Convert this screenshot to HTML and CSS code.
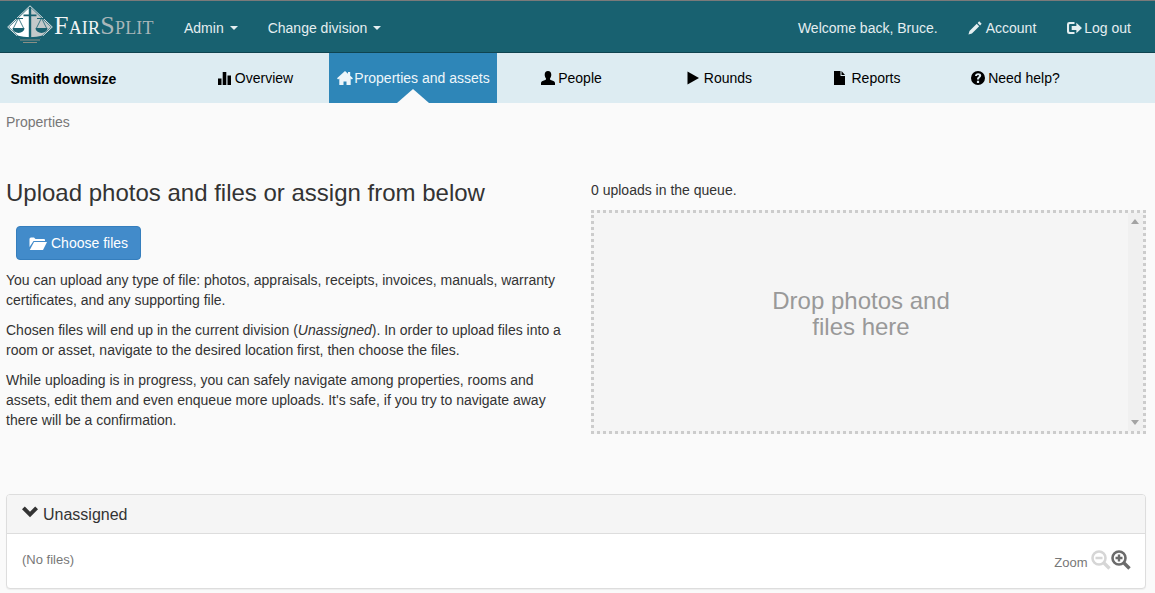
FILE: index.html
```html
<!DOCTYPE html>
<html lang="en">
<head>
<meta charset="utf-8">
<title>FairSplit</title>
<link rel="stylesheet" href="styles.css">
</head>
<body>
<header class="topbar">
  <a class="logo">
    <svg class="logo-mark" viewBox="0 0 46 40" width="46" height="40">
      <path d="M22 3L2 22 13 32.500H22Z" fill="#fff"/>
      <path d="M24 3L44 22 33 32.500H24Z" fill="#c3c9ca"/>
      <path d="M23 .8L45.300 22 33.500 33M23 .8L.7 22 12.500 33" fill="none" stroke="#dfe4e5" stroke-width="1"/>
      <path d="M21.800 3h2.400v6.500h5.300v1.800h-5.300V32h-2.400V11.300h-5.300V9.500h5.300z" fill="#186170"/>
      <path d="M8 13.500h8M30 13.500h8" stroke="#186170" stroke-width="1.200" fill="none"/>
      <path d="M11.500 13 6.500 23M11.500 13l5 10M34.500 13l-5 10M34.500 13l5 10" stroke="#186170" stroke-width=".8" fill="none"/>
      <path d="M5.500 23h12a6 5 0 0 1-12 0zM28.500 23h12a6 5 0 0 1-12 0z" fill="#186170"/>
      <path d="M10 30.500q13 3.500 26 0v3H10z" fill="#186170"/>
      <path d="M13 35h20M16 37.500h14" stroke="#8a8f85" stroke-width="1" fill="none"/>
    </svg>
    <span class="logo-text"><span class="logo-fair">Fair</span><span class="logo-split">Split</span></span>
  </a>
  <nav class="topnav">
    <a class="topnav-item">Admin<span class="caret"></span></a>
    <a class="topnav-item">Change division<span class="caret"></span></a>
  </nav>
  <div class="topright">
    <span class="welcome">Welcome back, Bruce.</span>
    <a class="topnav-item">
      <svg class="ico" viewBox="0 0 16 16"><path d="M12.800 0.400l2.800 2.800-1.800 1.800-2.800-2.800zM10 3.200L12.800 6 4.500 14.300 0.500 15.500l1.200-4z"/></svg>
      <span>Account</span></a>
    <a class="topnav-item">
      <svg class="ico ico-wide" viewBox="0 0 16 14"><path d="M0 3a2.500 2.500 0 0 1 2.500-2.500H8v2.200H3.200a1 1 0 0 0-1 1v6.600a1 1 0 0 0 1 1H8v2.200H2.500A2.500 2.500 0 0 1 0 11z"/><path d="M5 4.800h5V1.500L16 7l-6 5.500V9.200H5z"/></svg>
      <span>Log out</span></a>
  </div>
</header>

<nav class="subnav">
  <div class="case-name">Smith downsize</div>
  <a class="tab">
    <svg class="ico" viewBox="0 0 14 14"><path d="M0 7.500h3.500V14H0zM4.700 1h3.600v13H4.700zM9.500 4.500H13V14H9.500z"/></svg>
    <span>Overview</span></a>
  <a class="tab tab-active">
    <svg class="ico" viewBox="0 0 16 14"><path d="M8 0l3 2.700V1h2.200v3.700L16 7.300 14.900 8.500 13.700 7.500V14H9.500v-3.500h-3V14H2.300V7.500L1.100 8.500 0 7.300z"/></svg>
    <span>Properties and assets</span></a>
  <a class="tab">
    <svg class="ico" viewBox="0 0 14 14"><path d="M7 0c2.200 0 3.300 1.700 3.300 3.800 0 1.500-.6 2.900-1.300 3.700-.3.900.2 1.400 1.400 1.800 1.900.6 3.600 1.300 3.600 2.600V14H0v-2.100c0-1.300 1.700-2 3.600-2.600C4.800 8.900 5.300 8.400 5 7.500 4.300 6.700 3.700 5.300 3.700 3.800 3.700 1.700 4.800 0 7 0z"/></svg>
    <span>People</span></a>
  <a class="tab">
    <svg class="ico" viewBox="0 0 14 14"><path d="M.5 .5L12 7 .5 13.500z"/></svg>
    <span>Rounds</span></a>
  <a class="tab">
    <svg class="ico" viewBox="0 0 14 14"><path d="M0 0h6.500v5H11v9H0zM7.500 0L11 4H7.500z"/></svg>
    <span>Reports</span></a>
  <a class="tab">
    <svg class="ico" viewBox="0 0 14 14"><path fill-rule="evenodd" d="M7 0a7 7 0 1 1 0 14A7 7 0 0 1 7 0zM5.900 9.800V12h2.200V9.800zM7.100 2.200c-1.700 0-3 .9-3.100 2.700h2.100c0-.7.400-1 1-1s.9.300.9.800c0 1-2 1.300-2 3.300v.5h2.100v-.4c0-1.100 2.100-1.500 2.100-3.500 0-1.600-1.300-2.400-3.100-2.400z"/></svg>
    <span>Need help?</span></a>
</nav>

<main class="page">
  <div class="crumb">Properties</div>
  <section class="upload">
    <div class="upload-left">
      <h3 class="upload-title">Upload photos and files or assign from below</h3>
      <button class="btn-choose">
        <svg class="ico ico-folder" viewBox="0 0 18 14"><path d="M0.500 3a1.500 1.500 0 0 1 1.500-1.500h3L6.500 3H15a1 1 0 0 1 1 1v1H4.500L0.500 11z"/><path d="M5 6h13l-4 8H0.800z"/></svg>
        <span>Choose files</span></button>
      <p>You can upload any type of file: photos, appraisals, receipts, invoices, manuals, warranty certificates, and any supporting file.</p>
      <p>Chosen files will end up in the current division (<em>Unassigned</em>). In order to upload files into a room or asset, navigate to the desired location first, then choose the files.</p>
      <p>While uploading is in progress, you can safely navigate among properties, rooms and assets, edit them and even enqueue more uploads. It's safe, if you try to navigate away there will be a confirmation.</p>
    </div>
    <div class="upload-right">
      <div class="queue">0 uploads in the queue.</div>
      <div class="dropzone">
        <div class="drop-text">Drop photos and files here</div>
        <div class="drop-scroll"><span class="arrow-up"></span><span class="arrow-down"></span></div>
      </div>
    </div>
  </section>
  <section class="panel">
    <div class="panel-head">
      <svg class="chev" viewBox="0 0 16 12"><path d="M2.800 0.500L8 5.700 13.200 0.500 16 3.300 8 11.300 0 3.300z"/></svg>
      <span>Unassigned</span>
    </div>
    <div class="panel-body">
      <span class="nofiles">(No files)</span>
      <div class="zoom">
        <span class="zoom-label">Zoom</span>
        <svg class="zoom-ico zoom-off" viewBox="0 0 20 20"><circle cx="8" cy="8" r="6.500" fill="none" stroke-width="2.600"/><path d="M12.500 12.500L18.500 18.500" stroke-width="3.400" fill="none"/><path d="M4.500 8h7" stroke-width="2.400" fill="none"/></svg>
        <svg class="zoom-ico zoom-on" viewBox="0 0 20 20"><circle cx="8" cy="8" r="6.500" fill="none" stroke-width="2.600"/><path d="M12.500 12.500L18.500 18.500" stroke-width="3.400" fill="none"/><path d="M4.500 8h7M8 4.500v7" stroke-width="2.400" fill="none"/></svg>
      </div>
    </div>
  </section>
</main>
</body>
</html>
```
FILE: styles.css
```css
* { box-sizing: border-box; }
html, body { margin: 0; height: 100%; }
body {
  font-family: "Liberation Sans", Arial, sans-serif;
  font-size: 14px;
  line-height: 20px;
  color: #333;
  background: #fafafa;
  overflow: hidden;
}
.topbar {
  height: 53px;
  display: flex;
  align-items: center;
  background: #186170;
  border-top: 1px solid #7a7a7a;
  border-bottom: 1px solid #0f4450;
  color: #e4eef0;
}
.logo { display: flex; align-items: center; width: 169px; padding: 0 0 4px 7px; }
.logo-mark { flex: none; }
.logo-text {
  font-family: "Liberation Serif", serif;
  font-variant: small-caps;
  font-size: 26px;
  line-height: 30px;
  margin: 2px 0 0 1px;
  letter-spacing: 0.2px;
}
.logo-fair { color: #f2f5f5; }
.logo-split { color: #a9b6b9; }
.topnav { display: flex; }
.topnav-item { display: flex; align-items: center; padding: 2px 15px 0; white-space: nowrap; }
.caret {
  width: 0; height: 0;
  margin-left: 6px;
  border-top: 4px solid currentColor;
  border-left: 4px solid transparent;
  border-right: 4px solid transparent;
}
.topright { margin-left: auto; display: flex; align-items: center; padding-right: 9px; }
.welcome { padding: 2px 15px 0 0; }
.ico { width: 14px; height: 14px; fill: currentColor; flex: none; margin-right: 4px; }
.ico-wide { width: 15px; margin: 0 2px 0 1px; }
.subnav {
  height: 50px;
  display: grid;
  grid-template-columns: 181px 148px 168px 148px 148px 148px 148px;
  background: #ddecf2;
  color: #000;
}
.case-name { font-weight: 700; padding-left: 10.5px; align-self: center; padding-top: 2px; }
.tab { display: flex; align-items: center; justify-content: center; position: relative; padding-bottom: 1px; }
.tab .ico { margin: 0 3px 0 1px; }
.tab-active { background: #2e86b8; color: #eef6fa; }
.tab-active .ico { width: 16px; margin: 0 1px 0 1px; }
.tab-active::after {
  content: "";
  position: absolute;
  left: 50%;
  bottom: 0;
  margin-left: -16px;
  border-bottom: 14px solid #fafafa;
  border-left: 16px solid transparent;
  border-right: 16px solid transparent;
}
.page { padding: 9px 9px 0 6px; }
.crumb { color: #777; }
.upload { display: flex; margin-top: 38px; height: 324px; }
.upload-left { width: 585px; padding-right: 22px; }
.upload-title { font-size: 24px; font-weight: 400; line-height: 26px; margin: 10px 0 0; }
.btn-choose {
  display: flex;
  align-items: center;
  margin: 20px 0 10px 10px;
  width: 125px;
  height: 34px;
  padding: 0 12px;
  border: 1px solid #357ebd;
  border-radius: 4px;
  background: #428bca;
  color: #fff;
  font: inherit;
  white-space: nowrap;
}
.ico-folder { width: 18px; margin-right: 4px; }
.upload-left p { margin: 0 0 10px; }
.upload-right { flex: 1; }
.queue { height: 40px; padding-top: 10px; }
.dropzone {
  height: 224px;
  display: flex;
  border: 3px dotted #ccc;
  background: #f5f5f5;
}
.drop-text {
  flex: 1;
  align-self: center;
  padding: 0 165px 16px;
  text-align: center;
  font-size: 24px;
  line-height: 26px;
  color: #999;
}
.drop-scroll {
  width: 15px;
  background: #f0f0f0;
  display: flex;
  flex-direction: column;
  justify-content: space-between;
  align-items: center;
  padding: 6px 1px 6px 0;
}
.arrow-up { border-bottom: 5px solid #a3a3a3; border-left: 4px solid transparent; border-right: 4px solid transparent; }
.arrow-down { border-top: 5px solid #a3a3a3; border-left: 4px solid transparent; border-right: 4px solid transparent; }
.panel {
  height: 95px;
  border: 1px solid #ddd;
  border-radius: 4px;
  background: #fff;
  box-shadow: 0 1px 1px rgba(0,0,0,.05);
  overflow: hidden;
}
.panel-head {
  height: 39px;
  display: flex;
  align-items: center;
  padding: 2px 0 0 15px;
  background: #f5f5f5;
  border-bottom: 1px solid #ddd;
  font-size: 16px;
}
.chev { width: 16px; height: 12px; fill: #333; margin-right: 5px; margin-top: -6px; }
.panel-body { display: flex; justify-content: space-between; padding: 16px 14px 0 15px; font-size: 13px; color: #777; }
.nofiles { line-height: 20px; }
.zoom { display: flex; align-items: flex-start; }
.zoom-label { margin-top: 3px; margin-right: 3.5px; }
.zoom-ico { width: 20px; height: 20px; }
.zoom-off { stroke: #d6d6d6; }
.zoom-on { stroke: #6b6b6b; }
```
